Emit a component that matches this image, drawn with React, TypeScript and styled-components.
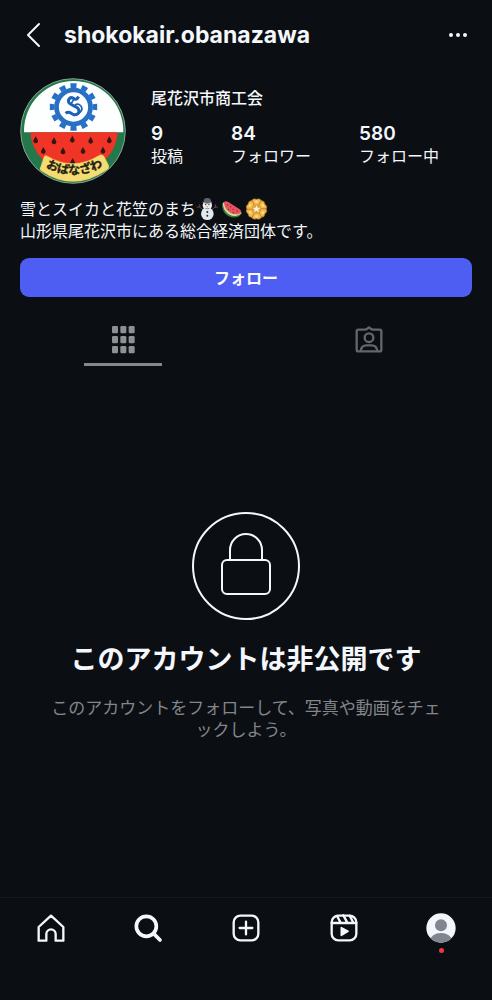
import React from 'react';
import styled, { createGlobalStyle } from 'styled-components';

const GlobalStyle = createGlobalStyle`
  * { box-sizing: border-box; }
  body {
    margin: 0;
    background: #0b0f14;
    color: #f4f7fb;
    font-family: Inter, "Noto Sans CJK JP", sans-serif;
    font-size: 16px;
    line-height: 22px;
  }
  h1, h2, p, dl, dt, dd { margin: 0; }
  button { font-family: inherit; }
  svg { display: block; }
`;

const Page = styled.div`
  display: flex;
  flex-direction: column;
  min-height: 100vh;
`;

const TopBar = styled.header`
  display: flex;
  align-items: center;
  height: 70px;
  padding: 0 20px;
`;

const IconButton = styled.button`
  display: flex;
  align-items: center;
  justify-content: center;
  padding: 0;
  border: 0;
  background: none;
  color: inherit;
  cursor: pointer;
`;

const Username = styled.h1`
  flex: 1;
  margin-left: 16px;
  font-size: 23px;
  line-height: 32px;
  font-weight: 700;
`;

const Profile = styled.section`
  padding: 8px 20px 0;
`;

const Summary = styled.div`
  display: flex;
  align-items: center;
  gap: 25px;
`;

const Details = styled.div`
  display: flex;
  flex-direction: column;
  gap: 14px;
  padding-bottom: 8px;
`;

const DisplayName = styled.h2`
  font-size: 16px;
  line-height: 22px;
  font-weight: 500;
`;

const Stats = styled.dl`
  display: flex;
  gap: 48px;
`;

const Stat = styled.div`
  display: flex;
  flex-direction: column-reverse;
`;

const StatLabel = styled.dt`
  font-size: 16px;
  line-height: 22px;
`;

const StatValue = styled.dd`
  font-size: 19px;
  line-height: 22px;
  font-weight: 600;
`;

const Bio = styled.div`
  margin-top: 14px;
`;

const BioLine = styled.p`
  display: flex;
  align-items: center;
`;

const Emojis = styled.span`
  display: flex;
  gap: 2px;
`;

const FollowButton = styled.button`
  display: block;
  width: 100%;
  height: 39px;
  margin-top: 16px;
  border: 0;
  border-radius: 9px;
  background: #4e5ef2;
  color: #f8faff;
  font-size: 16px;
  line-height: 22px;
  font-weight: 700;
  cursor: pointer;
`;

const Tabs = styled.div`
  display: grid;
  grid-template-columns: 1fr 1fr;
  margin-top: 18px;
`;

const Tab = styled.button<{ $active?: boolean }>`
  display: flex;
  flex-direction: column;
  align-items: center;
  gap: 9px;
  padding: 10px 0 0;
  border: 0;
  background: none;
  color: ${(p) => (p.$active ? '#8e9193' : '#63666a')};
  cursor: pointer;

  &::after {
    content: '';
    width: 78px;
    height: 3px;
    background: ${(p) => (p.$active ? '#85888a' : 'transparent')};
  }
`;

const PrivateNotice = styled.section`
  flex: 1;
  display: flex;
  flex-direction: column;
  align-items: center;
  justify-content: center;
  padding: 0 46px 11px;
  text-align: center;
`;

const NoticeTitle = styled.h2`
  margin-top: 22px;
  font-size: 27px;
  line-height: 36px;
  font-weight: 700;
  white-space: nowrap;
`;

const NoticeText = styled.p`
  margin-top: 19px;
  color: #83868b;
  font-size: 17px;
  line-height: 22px;
  line-break: anywhere;
`;

const BottomNav = styled.nav`
  display: flex;
  justify-content: space-around;
  align-items: flex-start;
  height: 103px;
  padding: 14px 2px 0;
  border-top: 1px solid #15191e;
`;

const NavLink = styled.a`
  display: flex;
  flex-direction: column;
  align-items: center;
  gap: 4px;
  color: inherit;
`;

const Dot = styled.span`
  width: 5px;
  height: 5px;
  border-radius: 50%;
  background: #ef3548;
`;

const seeds = [
  [74, 212], [129, 215], [184, 210], [239, 213], [295, 212],
  [97, 244], [156, 245], [216, 244], [276, 243], [185, 277],
];

const teeth = Array.from({ length: 12 }, (_, i) => i * 30);

function Avatar() {
  return (
    <svg width="106" height="106" viewBox="27 26 318 318" role="img" aria-label="尾花沢市商工会">
      <defs>
        <clipPath id="upper"><rect x="27" y="26" width="318" height="163" /></clipPath>
        <clipPath id="lower"><rect x="27" y="189" width="318" height="155" /></clipPath>
        <path id="ribbonText" d="M97 289 Q187 342 283 287" />
      </defs>
      <circle cx="186" cy="185" r="157" fill="#24784a" stroke="#b9cdbf" strokeWidth="2" />
      <circle cx="188" cy="184" r="149" fill="#fdfefe" clipPath="url(#upper)" />
      <ellipse cx="189" cy="184" rx="131" ry="125" fill="#f03425" clipPath="url(#lower)" />
      <g fill="#2870c4">
        {teeth.map((a) => (
          <path key={a} d="M179 56 L178 42 H197 L196 56 Z" transform={`rotate(${a} 187.500 113)`} />
        ))}
      </g>
      <circle cx="187.500" cy="113" r="51" fill="none" stroke="#2870c4" strokeWidth="14" />
      <path
        d="M203 82 C198 90 194 92 187 87 C179 81 170 90 173 99 C176 107 193 109 201 117 C209 128 200 138 188 136 C178 131 173 124 164 132"
        fill="none" stroke="#1d62b5" strokeWidth="9" strokeLinejoin="round"
      />
      <path
        d="M179 106 L190 87 M191 108 C205 98 219 115 209 127 L200 135"
        fill="none" stroke="#1d62b5" strokeWidth="5"
      />
      <g fill="#321712">
        {seeds.map(([x, y]) => (
          <path key={`${x}-${y}`} d={`M${x} ${y - 11} C${x + 3} ${y - 4} ${x + 8} ${y} ${x + 7} ${y + 5} Q${x} ${y + 15} ${x - 7} ${y + 5} C${x - 8} ${y} ${x - 3} ${y - 4} ${x} ${y - 11}Z`} />
        ))}
      </g>
      <path
        d="M107 259 Q187 307 265 258 Q274 253 279 261 L292 286 Q297 296 287 302 Q187 370 91 305 Q84 300 89 292 L98 265 Q101 257 107 259Z"
        fill="#f5dc72" stroke="#e8c456" strokeWidth="1"
      />
      <text fill="#241d12" stroke="#241d12" strokeWidth="1" fontSize="36" fontWeight="700" fontFamily="Noto Sans CJK JP, sans-serif" textAnchor="middle">
        <textPath href="#ribbonText" startOffset="50%">おばなざわ</textPath>
      </text>
    </svg>
  );
}

function Snowman() {
  return (
    <svg width="23" height="22" viewBox="0 0 69 66" role="img" aria-label="雪だるま">
      <path d="M20 34 L7 25 M8 29 L2 27 M12 27 L10 19 M49 34 L60 25 M57 27 L59 19 M57 28 L66 27" stroke="#5b4a43" strokeWidth="3" fill="none" />
      <circle cx="34" cy="47" r="19" fill="#e1e9ee" />
      <circle cx="34" cy="22" r="14" fill="#eef2f5" />
      <path d="M22 13 L25 2 Q34 -2 43 2 L46 13 Q34 19 22 13Z" fill="#62666b" />
      <path d="M20 13 Q34 20 48 13" stroke="#85898d" strokeWidth="3" fill="none" />
      <circle cx="29" cy="20" r="2" fill="#222" /><circle cx="39" cy="20" r="2" fill="#222" />
      <path d="M31 25 L37 24 L34 29Z" fill="#e78b42" />
      <path d="M28 31 Q34 34 40 31" stroke="#555" strokeWidth="2" fill="none" />
      <circle cx="34" cy="42" r="3" fill="#25282b" /><circle cx="34" cy="53" r="3" fill="#25282b" />
    </svg>
  );
}

function Watermelon() {
  return (
    <svg width="22" height="22" viewBox="0 0 66 66" role="img" aria-label="スイカ">
      <path d="M4 15 C-1 39 20 62 45 58 Q56 57 63 45Z" fill="#397c3d" />
      <path d="M6 13 C4 36 22 56 44 54 Q55 53 62 44Z" fill="#d8dba0" />
      <path d="M9 12 Q14 7 23 13 L55 33 Q63 39 59 45 C42 56 9 42 9 12Z" fill="#e9535e" />
      <g fill="#6e2932"><circle cx="19" cy="21" r="2" /><circle cx="29" cy="26" r="2" /><circle cx="23" cy="34" r="2" /><circle cx="36" cy="34" r="2" /><circle cx="37" cy="44" r="2" /><circle cx="48" cy="39" r="2" /></g>
    </svg>
  );
}

function Rosette() {
  return (
    <svg width="23" height="22" viewBox="0 0 66 66" role="img" aria-label="花笠">
      {[0, 60, 120, 180, 240, 300].map((a) => (
        <g key={a} transform={`rotate(${a} 33 33)`}>
          <path d="M33 33 L18 9 Q23 -1 33 4 Q43 -1 48 9Z" fill="#f2bb50" stroke="#b8741f" strokeWidth="2" />
          <circle cx="33" cy="11" r="4" fill="#ffdc85" />
        </g>
      ))}
      <circle cx="33" cy="33" r="15" fill="#dfa03c" />
      <path d="M33 21 L36 29 L45 29 L38 35 L41 43 L33 38 L25 43 L28 35 L21 29 L30 29Z" fill="#fff3d2" />
    </svg>
  );
}

const line = { fill: 'none', stroke: 'currentColor', strokeLinecap: 'round', strokeLinejoin: 'round' } as const;

function GridIcon() {
  return (
    <svg width="28" height="29" viewBox="0 0 84 87" fill="currentColor" aria-hidden="true">
      {[3, 33, 63].map((y) => [9, 34, 59].map((x) => (
        <rect key={`${x}-${y}`} x={x} y={y} width="18" height="22" rx="4" />
      )))}
    </svg>
  );
}

function TaggedIcon() {
  return (
    <svg width="28" height="29" viewBox="0 0 84 87" {...line} strokeWidth="7" aria-hidden="true">
      <path d="M10 14 H29 Q34 14 37 11 L42 7 L47 11 Q50 14 55 14 H74 Q79 14 79 19 V74 Q79 79 74 79 H10 Q5 79 5 74 V19 Q5 14 10 14Z" />
      <circle cx="42" cy="38" r="13" />
      <path d="M17 77 Q20 61 34 61 H50 Q64 61 67 77" />
    </svg>
  );
}

function LockIcon() {
  return (
    <svg width="108" height="108" viewBox="0 0 108 108" {...line} strokeWidth="2" aria-hidden="true">
      <circle cx="54" cy="54" r="53" />
      <rect x="30" y="48" width="48" height="34" rx="5" />
      <path d="M38 48 V38 a16 16 0 0 1 32 0 V48" />
    </svg>
  );
}

const iconProps = { width: 32, height: 32, viewBox: '0 0 96 96', 'aria-hidden': true } as const;

export default function App() {
  return (
    <>
      <GlobalStyle />
      <Page lang="ja">
        <TopBar>
          <IconButton aria-label="戻る">
            <svg width="28" height="32" viewBox="0 0 28 32" {...line} strokeWidth="2">
              <path d="M19 5 L8 16 L19 27" />
            </svg>
          </IconButton>
          <Username>shokokair.obanazawa</Username>
          <IconButton aria-label="その他">
            <svg width="28" height="32" viewBox="0 0 28 32" fill="currentColor">
              <circle cx="7" cy="16" r="2" /><circle cx="14" cy="16" r="2" /><circle cx="21" cy="16" r="2" />
            </svg>
          </IconButton>
        </TopBar>

        <Profile>
          <Summary>
            <Avatar />
            <Details>
              <DisplayName>尾花沢市商工会</DisplayName>
              <Stats>
                <Stat><StatLabel>投稿</StatLabel><StatValue>9</StatValue></Stat>
                <Stat><StatLabel>フォロワー</StatLabel><StatValue>84</StatValue></Stat>
                <Stat><StatLabel>フォロー中</StatLabel><StatValue>580</StatValue></Stat>
              </Stats>
            </Details>
          </Summary>
          <Bio>
            <BioLine>
              雪とスイカと花笠のまち
              <Emojis><Snowman /><Watermelon /><Rosette /></Emojis>
            </BioLine>
            <BioLine>山形県尾花沢市にある総合経済団体です。</BioLine>
          </Bio>
          <FollowButton>フォロー</FollowButton>
        </Profile>

        <Tabs role="tablist">
          <Tab role="tab" aria-selected="true" aria-label="投稿" $active><GridIcon /></Tab>
          <Tab role="tab" aria-selected="false" aria-label="タグ付け"><TaggedIcon /></Tab>
        </Tabs>

        <PrivateNotice>
          <LockIcon />
          <NoticeTitle>このアカウントは非公開です</NoticeTitle>
          <NoticeText>このアカウントをフォローして、写真や動画をチェックしよう。</NoticeText>
        </PrivateNotice>

        <BottomNav>
          <NavLink href="#home" aria-label="ホーム">
            <svg {...iconProps} {...line} strokeWidth="7">
              <path d="M11 86 V45 L48 11 L85 45 V86 H62 V66 a14 14 0 0 0 -28 0 V86Z" />
            </svg>
          </NavLink>
          <NavLink href="#search" aria-label="検索">
            <svg {...iconProps} {...line} strokeWidth="11">
              <circle cx="43" cy="43" r="30" /><path d="M65 65 L84 84" />
            </svg>
          </NavLink>
          <NavLink href="#create" aria-label="作成">
            <svg {...iconProps} {...line} strokeWidth="7">
              <rect x="11" y="11" width="74" height="74" rx="20" /><path d="M48 29 V67 M29 48 H67" />
            </svg>
          </NavLink>
          <NavLink href="#reels" aria-label="リール">
            <svg {...iconProps} {...line} strokeWidth="7">
              <rect x="11" y="11" width="74" height="74" rx="20" />
              <path d="M11 33 H85 M27 12 L38 32 M46 10 L58 32 M65 11 L75 30" />
              <path d="M40 47 L60 58 L40 70Z" fill="currentColor" strokeWidth="5" />
            </svg>
          </NavLink>
          <NavLink href="#profile" aria-label="プロフィール">
            <svg {...iconProps}>
              <defs><clipPath id="face"><circle cx="48" cy="48" r="44" /></clipPath></defs>
              <circle cx="48" cy="48" r="44" fill="#f3f6fa" />
              <g fill="#81858f" clipPath="url(#face)">
                <circle cx="48" cy="40" r="18" /><ellipse cx="48" cy="87" rx="33" ry="24" />
              </g>
            </svg>
            <Dot />
          </NavLink>
        </BottomNav>
      </Page>
    </>
  );
}
